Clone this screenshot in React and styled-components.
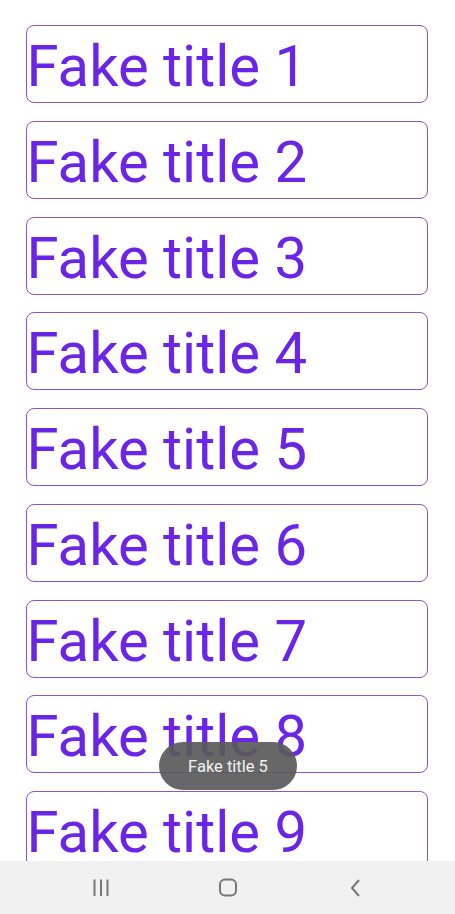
import React from "react";
import styled, { createGlobalStyle } from "styled-components";

const Global = createGlobalStyle`
  html, body { margin: 0; padding: 0; background: #ffffff; }
  body { font-family: Roboto, "Noto Sans", sans-serif; }
  #root { height: 100vh; }
`;

const Screen = styled.div`
  position: relative;
  height: 914px;
  width: 455px;
  display: flex;
  flex-direction: column;
  overflow: hidden;
  background: #ffffff;
`;

const List = styled.div`
  flex: 1;
  min-height: 0;
  overflow: hidden;
  display: flex;
  flex-direction: column;
  gap: 17.75px;
  padding: 25px 27px 0 26px;
`;

const Card = styled.div`
  flex: none;
  box-sizing: border-box;
  height: 78px;
  border: 1.3px solid #8a55d3;
  border-radius: 8px;
  padding: 7px 0 0 0;
  overflow: hidden;
`;

const Title = styled.div`
  font-family: Roboto, sans-serif;
  font-size: 58px;
  line-height: 66px;
  color: #6b25e6;
  white-space: nowrap;
  margin-left: -0.5px;
`;

const NavBar = styled.div`
  flex: none;
  height: 53px;
  background: #f1f1f1;
  display: flex;
  align-items: center;
  justify-content: center;
  gap: 107px;
`;

const NavIcon = styled.svg`
  display: block;
  flex: none;
  margin-top: ${(p) => p.$dy || 0}px;
`;

const Toast = styled.div`
  position: absolute;
  left: 159px;
  top: 742px;
  width: 138px;
  height: 48px;
  border-radius: 24px;
  background: rgba(90, 90, 90, 0.92);
  color: #f2f2f2;
  font-family: Roboto, sans-serif;
  font-size: 16.5px;
  display: flex;
  align-items: center;
  justify-content: center;
`;

export default function App() {
  const items = Array.from({ length: 9 }, (_, i) => `Fake title ${i + 1}`);
  return (
    <>
      <Global />
      <Screen>
        <List>
          {items.map((t) => (
            <Card key={t}>
              <Title>{t}</Title>
            </Card>
          ))}
        </List>
        <NavBar>
          <NavIcon width="20" height="20" viewBox="0 0 20 20">
            <g stroke="#767676" strokeWidth="2">
              <line x1="3.5" y1="1.5" x2="3.5" y2="18" />
              <line x1="10" y1="1.5" x2="10" y2="18" />
              <line x1="16.5" y1="1.5" x2="16.5" y2="18" />
            </g>
          </NavIcon>
          <NavIcon width="20" height="20" viewBox="0 0 20 20" $dy={1}>
            <rect x="2" y="1.5" width="16" height="16" rx="5" fill="none" stroke="#767676" strokeWidth="2" />
          </NavIcon>
          <NavIcon width="20" height="20" viewBox="0 0 20 20">
            <polyline points="14,2 7,10 14,18" fill="none" stroke="#767676" strokeWidth="2" />
          </NavIcon>
        </NavBar>
        <Toast>Fake title 5</Toast>
      </Screen>
    </>
  );
}
